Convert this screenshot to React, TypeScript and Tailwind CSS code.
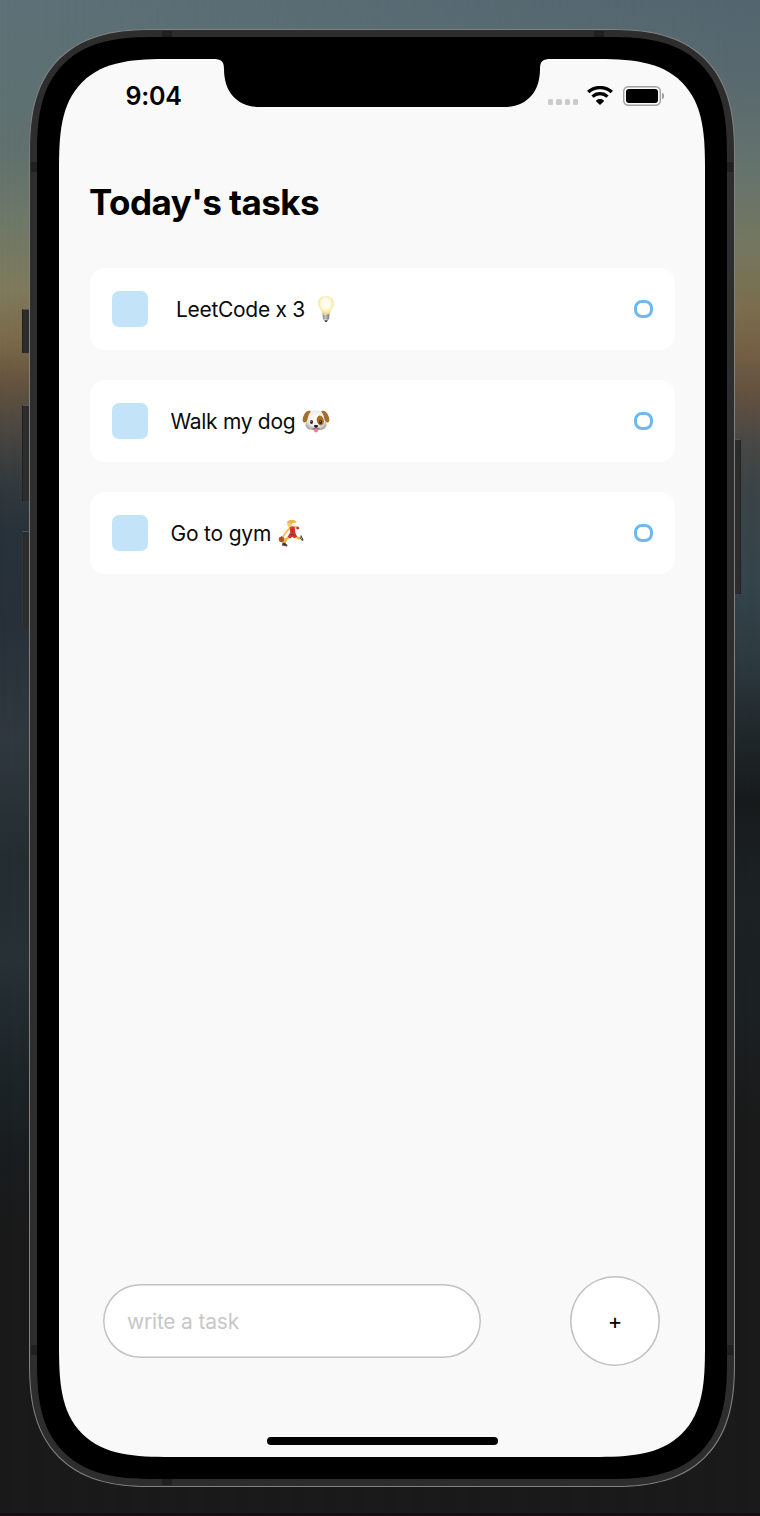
import React from "react";

function Bulb() {
  return (
    <svg width="18" height="28" viewBox="0 0 18 28" aria-hidden="true">
      <defs>
        <radialGradient id="glass" cx="50%" cy="42%" r="58%">
          <stop offset="0" stopColor="#fffef8" />
          <stop offset="0.5" stopColor="#fffbe4" />
          <stop offset="0.8" stopColor="#f9e6a0" />
          <stop offset="1" stopColor="#e3ca7c" />
        </radialGradient>
        <linearGradient id="metal" x1="0" x2="1" y1="0" y2="0">
          <stop offset="0" stopColor="#8a8a88" />
          <stop offset="0.4" stopColor="#e2e2e0" />
          <stop offset="1" stopColor="#777775" />
        </linearGradient>
      </defs>
      <path d="M9 1C4.4 1 1.1 4.4 1.1 8.6c0 3.6 2.4 5.4 3.4 7.8.5 1.3.7 2.3 1 3.2h7c.3-.9.5-1.9 1-3.2 1-2.4 3.4-4.2 3.4-7.8C16.900 4.400 13.600 1 9 1z" fill="url(#glass)" />
      <path d="M5.500 19.300h7l-.4 4.300c-.1 1-.8 1.400-1.400 1.700L10 26.600H8l-.7-1.300c-.6-.3-1.300-.7-1.400-1.700z" fill="url(#metal)" />
      <path d="M5.700 21.300l6.500-.5M6 23.300l6-.5" stroke="#777" strokeWidth="0.600" />
      <path d="M7.300 25.200h3.400L9.800 26.900H8.200z" fill="#444" />
    </svg>
  );
}

function Dog() {
  return (
    <svg width="28" height="24" viewBox="0 0 28 24" aria-hidden="true">
      <defs>
        <radialGradient id="face" cx="50%" cy="40%" r="62%">
          <stop offset="0" stopColor="#ffffff" />
          <stop offset="0.65" stopColor="#eceae7" />
          <stop offset="1" stopColor="#aaa59f" />
        </radialGradient>
      </defs>
      <path d="M14 1.200c-5 0-8.200 2.800-8.800 8C4.900 12 3.300 13.600 3.500 16c.3 3.600 4.300 5.200 7.500 5.200h6c3.200 0 7.200-1.600 7.500-5.200.2-2.400-1.400-4-1.700-6.800-.6-5.200-3.800-8-8.800-8z" fill="url(#face)" />
      <path d="M8.700 2C5.500.9 3.300 2.900 2 6 .9 8.500.3 10.300.8 12c.7 2 2.700 2 3.700.4C6 10.200 5.800 7.500 6.800 5.400 7.400 4.200 8.800 3.200 8.700 2z" fill="#a56e2b" />
      <path d="M19.300 2c3.200-1.100 5.400.9 6.700 4 1.100 2.500 1.700 4.300 1.200 6-.7 2-2.700 2-3.700.4-1.500-2.200-1.300-4.900-2.300-7-.6-1.200-2-2.200-1.900-3.400z" fill="#a56e2b" />
      <ellipse cx="18.300" cy="11.500" rx="3.500" ry="5" fill="#a96c28" transform="rotate(-14 18.300 11.500)" />
      <ellipse cx="9.500" cy="13" rx="1.500" ry="2" fill="#292522" />
      <ellipse cx="18.500" cy="13" rx="1.500" ry="2" fill="#292522" />
      <circle cx="9.200" cy="12.300" r=".5" fill="#ddd" />
      <circle cx="18.200" cy="12.300" r=".5" fill="#ddd" />
      <path d="M12 20c0-1 4-1 4 0v1.500c0 2.600-4 2.600-4 0z" fill="#f17f9b" />
      <path d="M10.500 19.700c1.500.4 3-.2 3.500-1.200.5 1 2 1.600 3.500 1.200" fill="none" stroke="#514642" strokeWidth=".8" />
      <path d="M11.900 16.800c0-1.200 4.200-1.200 4.200 0 0 1-1.200 2-2.100 2s-2.100-1-2.100-2z" fill="#201e1e" />
    </svg>
  );
}

function Player() {
  return (
    <svg width="26" height="28" viewBox="0 0 26 28" aria-hidden="true">
      <path d="M12.500 17l-4.300 3-1.500 4.200" fill="none" stroke="#f3b544" strokeWidth="2.400" strokeLinejoin="round" />
      <path d="M16.500 16.500l4.200 3 2.800-.9" fill="none" stroke="#f3b544" strokeWidth="2.400" strokeLinejoin="round" />
      <path d="M12.300 8.500L9 12l-4.300 6" fill="none" stroke="#f6c052" strokeWidth="1.900" strokeLinecap="round" strokeLinejoin="round" />
      <path d="M16.500 7.500l3.300 2.200" fill="none" stroke="#f6c052" strokeWidth="2" strokeLinecap="round" />
      <path d="M11.800 7.800c1.800-1 3.900-.8 5 .5l.6 5.500 1.600 4-2.800 1.400-2-1.500-2 1.700-2.600-1.700 2.600-4.200z" fill="#cf3733" />
      <path d="M13.200 10l2 3M12.500 15.500l4 .6" stroke="#92201f" strokeWidth=".8" />
      <path d="M18.600 7.300l2.300.8.400 1.700-1.600.7-1.500-1z" fill="#d23d35" />
      <ellipse cx="11.600" cy="5" rx="2.500" ry="3" fill="#f8cb68" />
      <path d="M8.800 3.200C10 1.300 12.500.3 15 .9c1.900.2 3 1.200 3.700 2.800-2-.6-2.800.4-4.500.2l-.6 2.200-1.400-2.300c-1.200-.3-2 .1-3.400-.6z" fill="#ecb04a" />
      <circle cx="3.600" cy="20.300" r="2.900" fill="#b7622c" />
      <path d="M1.200 19l4.600 2.500M3.500 17.500l-.4 5.500" stroke="#734020" strokeWidth=".5" />
      <path d="M4.600 23.300l2.600.8 2.300 2-.5 1.200-5-.7z" fill="#3b3b45" />
      <path d="M4 26.300l5 .8" stroke="#d43c3a" strokeWidth=".8" />
      <path d="M23 15.800l1.600 3.300 1 2-1.400.8-2.300-2.800z" fill="#3b3b45" />
      <path d="M22.300 17.500l1.600 2.800" stroke="#eee" strokeWidth=".6" />
    </svg>
  );
}

const tasks = [
  { label: "LeetCode x 3", emoji: <Bulb />, labelClass: "pl-[28.500px] w-[171px] tracking-[-0.300px]", emojiClass: "ml-[-2px]" },
  { label: "Walk my dog", emoji: <Dog />, labelClass: "pl-[23px] w-[154px] tracking-[-0.300px]", emojiClass: "" },
  { label: "Go to gym", emoji: <Player />, labelClass: "pl-[23px] w-[130px] tracking-[-0.200px]", emojiClass: "" },
];

function Task({ task }: { task: (typeof tasks)[number] }) {
  return (
    <li className="flex h-[82px] items-center rounded-[15px] bg-white pr-[22px] pl-[22px]">
      <span className="size-9 shrink-0 rounded-[7px] bg-[#c3e3f8]" />
      <span className={`shrink-0 pt-[2px] text-[21px] whitespace-nowrap text-[#0b0b0b] ${task.labelClass}`}>{task.label}</span>
      <span className={`flex shrink-0 ${task.emojiClass}`}>{task.emoji}</span>
      <span className="ml-auto size-[18.500px] rounded-[8px] border-[3px] border-[#71b8ef]" />
    </li>
  );
}

function StatusBar() {
  return (
    <div className="flex h-[74px] items-center pr-[41px] pl-[66.500px]">
      <span className="pt-[2px] text-[25px] font-semibold tracking-[-0.2px] text-black">9:04</span>
      <div className="ml-auto flex h-5 items-center">
        <div className="mt-[12px] mr-[9px] flex gap-[3px]">
          <i className="size-[5.200px] rounded-[1.500px] bg-[#cbcbcb]" />
          <i className="size-[5.200px] rounded-[1.500px] bg-[#cbcbcb]" />
          <i className="size-[5.200px] rounded-[1.500px] bg-[#cbcbcb]" />
          <i className="size-[5.200px] rounded-[1.500px] bg-[#cbcbcb]" />
        </div>
        <svg className="-mt-px" width="26" height="19" viewBox="0 0 26 19" aria-hidden="true">
          <path d="M1.200 6.100C7.800.1 18.200.1 24.800 6.100" fill="none" stroke="#000" strokeWidth="3.400" />
          <path d="M5.500 10.700c4.200-4 10.800-4 15 0" fill="none" stroke="#000" strokeWidth="3.200" />
          <path d="M9.300 14.300c2-1.900 5.400-1.900 7.400 0 .4.500.3.900 0 1.300L13 18.900l-3.700-3.300c-.3-.4-.4-.8 0-1.300z" fill="#000" />
        </svg>
        <div className="-mt-px ml-[10px] flex h-5 w-[38px] rounded-[5.500px] p-[3px] shadow-[inset_0_0_0_1.4px_#a0a0a0]">
          <span className="h-full w-full rounded-[3px] bg-black" />
        </div>
        <span className="-mt-px ml-px h-[6px] w-[2px] rounded-r-full bg-[#a0a0a0]" />
      </div>
    </div>
  );
}

export default function App() {
  return (
    <div
      className="relative h-[1516px] w-[760px] overflow-hidden bg-[linear-gradient(180deg,#5d7178_0px,#60716f_150px,#6e7868_220px,#7f7a5c_290px,#7b6a4a_340px,#65543f_382px,#4d4841_425px,#353b3e_475px,#28323b_530px,#273039_620px,#30393f_740px,#242d31_860px,#273136_960px,#1d2529_1070px,#191d1f_1150px,#1a1a1a_1230px)] pt-[29px] pl-[29px]"
      style={{ fontFamily: 'Inter, "Liberation Sans", sans-serif' }}
    >
      <div className="absolute inset-0 bg-[linear-gradient(180deg,#53656e_0px,#58696f_80px,#65736d_170px,#74765f_245px,#7a6e4d_305px,#755f46_350px,#62513f_395px,#494845_440px,#3b4447_490px,#35454c_580px,#2d3a40_660px,#20282b_730px,#171a1b_800px,#1c2224_900px,#1b2022_1010px,#1a1a1a_1120px)] [mask-image:linear-gradient(to_right,transparent,black)]" />
      <div className="absolute inset-x-0 bottom-0 h-[3px] bg-[#150d12]" />

      <div className="absolute top-[309px] left-[22px] h-11 w-2 border-t border-l border-t-[#555] border-l-[#222] bg-[#2c2c2c]" />
      <div className="absolute top-[405px] left-[22px] h-24 w-2 border-t border-l border-t-[#555] border-l-[#222] bg-[#2c2c2c]" />
      <div className="absolute top-[531px] left-[22px] h-[97px] w-2 border-t border-l border-t-[#555] border-l-[#333] bg-[#2c2c2c]" />
      <div className="absolute top-[439px] left-[734px] h-[155px] w-[7px] border-t border-r border-t-[#555] border-r-[#222] bg-[#2c2c2c]" />

      <div className="relative h-[1458px] w-[706px] rounded-[98px] border border-[#828282] bg-[#2d2d2d] p-[7px] supports-[corner-shape:squircle]:rounded-[125px] supports-[corner-shape:squircle]:[corner-shape:superellipse(1.36)]">
        <i className="absolute top-px left-[132px] h-[6px] w-[10px] bg-[#202020]" />
        <i className="absolute top-px right-[130px] h-[6px] w-[10px] bg-[#202020]" />
        <i className="absolute bottom-px left-[132px] h-[6px] w-[10px] bg-[#202020]" />
        <i className="absolute top-[132px] left-px h-[10px] w-[6px] bg-[#202020]" />
        <i className="absolute top-[132px] right-px h-[10px] w-[6px] bg-[#202020]" />
        <i className="absolute top-[1315px] left-px h-[10px] w-[6px] bg-[#202020]" />
        <i className="absolute top-[1315px] right-px h-[10px] w-[6px] bg-[#202020]" />

        <div className="relative h-[1442px] w-[690px] rounded-[90px] bg-black p-[22px] supports-[corner-shape:squircle]:rounded-[118px] supports-[corner-shape:squircle]:[corner-shape:superellipse(1.43)]">
          <main className="relative flex h-[1398px] w-[646px] flex-col rounded-[78px] bg-[#f9f9f9] supports-[corner-shape:squircle]:rounded-[112px] supports-[corner-shape:squircle]:[corner-shape:superellipse(1.58)]">
            <svg className="absolute -top-px left-[154px]" width="338" height="50" viewBox="0 0 338 50" aria-hidden="true">
              <path d="M0 0v1c8 0 11 2 11 10 0 24 14 38 36 38h244c22 0 36-14 36-38 0-8 3-10 11-10V0z" fill="#000" />
            </svg>
            <StatusBar />
            <h1 className="mt-[47px] ml-[30px] h-11 text-[35px] leading-[45px] font-bold tracking-[-0.550px] whitespace-nowrap text-black">
              Today's tasks
            </h1>
            <ul className="mt-[44px] flex flex-col gap-[30px] px-[30.500px]">
              {tasks.map((task) => (
                <Task key={task.label} task={task} />
              ))}
            </ul>
            <form className="mt-auto mb-[91px] flex items-center justify-between pr-[45px] pl-[44px]" onSubmit={(e) => e.preventDefault()}>
              <input
                className="h-[74px] w-[378px] rounded-full bg-white px-[24px] text-[21px] tracking-[-0.200px] shadow-[inset_0_0_0_1.5px_#c2c2c2] outline-none placeholder:text-[#c7c7c7] placeholder:opacity-100"
                placeholder="write a task"
              />
              <button className="flex size-[90px] items-center justify-center rounded-full bg-white text-[22px] text-black shadow-[inset_0_0_0_1.5px_#c2c2c2]">
                +
              </button>
            </form>
            <div className="absolute bottom-3 left-[208px] h-2 w-[231px] rounded-full bg-black" />
          </main>
        </div>
      </div>
    </div>
  );
}
